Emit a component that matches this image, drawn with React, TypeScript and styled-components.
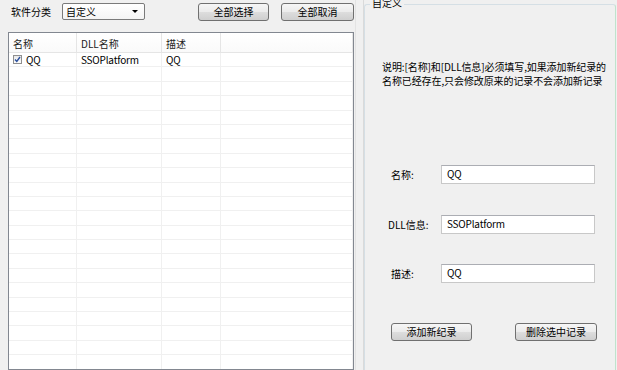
import React from 'react'
import styled, { createGlobalStyle } from 'styled-components'

const GlobalStyle = createGlobalStyle`
  html, body {
    margin: 0;
    padding: 0;
    background: #f0f0f0;
    overflow: hidden;
  }
  body {
    font-family: "Noto Sans CJK SC", "Liberation Sans", sans-serif;
    font-size: 10px;
    color: #000;
  }
`

const Window = styled.div`
  display: flex;
  width: 617px;
  height: 370px;
  overflow: hidden;
`

const LeftPane = styled.div`
  width: 355px;
  padding-left: 8px;
  box-sizing: border-box;
  display: flex;
  flex-direction: column;
`

const Toolbar = styled.div`
  display: flex;
  align-items: center;
  height: 17px;
  margin-top: 3px;
  margin-bottom: 12px;
`

const Label = styled.span`
  margin-left: 3px;
  width: 51px;
  line-height: 17px;
`

const Combo = styled.div`
  width: 83px;
  height: 17px;
  box-sizing: border-box;
  border: 1px solid #7a7a7a;
  background: linear-gradient(#ffffff, #f4f4f4);
  display: flex;
  align-items: center;
  justify-content: space-between;
  padding: 0 6px 0 3px;
  border-radius: 2px;
`

const Arrow = styled.span`
  width: 0;
  height: 0;
  border-left: 3px solid transparent;
  border-right: 3px solid transparent;
  border-top: 3px solid #000;
`

const Button = styled.div<{ $width: number; $left?: number }>`
  width: ${p => p.$width}px;
  margin-left: ${p => p.$left ?? 0}px;
  height: 18px;
  box-sizing: border-box;
  border: 1px solid #707070;
  border-radius: 3px;
  background: linear-gradient(#f6f6f6 0%, #ebebeb 50%, #dddddd 51%, #cfcfcf 100%);
  display: flex;
  align-items: center;
  justify-content: center;
  line-height: 16px;
`

const List = styled.div`
  width: 346px;
  height: 345px;
  box-sizing: border-box;
  border: 1px solid #828790;
  background: #fff;
  overflow: hidden;
`

const cols = '68px 85px 59px 1fr'

const HeaderRow = styled.div`
  display: grid;
  grid-template-columns: ${cols};
  height: 19px;
  border-bottom: 1px solid #e5e5e5;
  background: linear-gradient(#ffffff, #fafafa);
`

const HeaderCell = styled.div`
  border-right: 1px solid #e5e5e5;
  padding-left: 4px;
  line-height: 21px;
  color: #222;
`

const Row = styled.div`
  display: grid;
  grid-template-columns: ${cols};
  height: 14.4px;
  box-sizing: border-box;
  border-bottom: 1px solid #f0f0f0;
`

const Cell = styled.div`
  border-right: 1px solid #f0f0f0;
  padding-left: 4px;
  display: flex;
  align-items: center;
  line-height: 14px;
  overflow: hidden;
  white-space: nowrap;
  letter-spacing: -0.2px;
`

const Check = styled.span`
  width: 9px;
  height: 9px;
  box-sizing: border-box;
  border: 1px solid #8f8f8f;
  background: linear-gradient(#e8e8e8, #fdfdfd);
  margin-right: 4px;
  display: flex;
  align-items: center;
  justify-content: center;
`

const Splitter = styled.div`
  width: 9px;
  border-left: 1px solid #e3e3e3;
  border-right: 1px solid #dadada;
  box-sizing: border-box;
`

const Group = styled.div`
  position: relative;
  margin-top: 4px;
  width: 252px;
  height: 380px;
  box-sizing: border-box;
  border: 1px solid #d5dfe5;
  border-right-color: #bfe3cc;
  border-radius: 3px;
  padding: 0 0 0 17px;
  display: flex;
  flex-direction: column;
`

const Legend = styled.span`
  position: absolute;
  top: -9px;
  left: 5px;
  padding: 0 2px;
  background: #f0f0f0;
  line-height: 13px;
`

const Note = styled.p`
  margin: 55px 0 0 0;
  line-height: 13.5px;
  white-space: nowrap;
  letter-spacing: -0.1px;
`

const Form = styled.div`
  margin-top: 78px;
  display: flex;
  flex-direction: column;
  gap: 30.5px;
  padding-left: 6px;
`

const Field = styled.div`
  display: flex;
  align-items: center;
  height: 19px;
`

const FieldLabel = styled.span<{ $shift?: number }>`
  width: 53px;
  box-sizing: border-box;
  padding-left: ${p => p.$shift ?? 0}px;
`

const Input = styled.div`
  width: 154px;
  height: 19px;
  box-sizing: border-box;
  border: 1px solid #c8c8c8;
  border-top-color: #abadb3;
  background: #fff;
  padding-left: 5px;
  line-height: 16px;
  letter-spacing: -0.2px;
`

const Actions = styled.div`
  display: flex;
  margin-top: 40px;
  padding-left: 9px;
`

const rows = Array.from({ length: 23 })

const App = () => (
  <Window>
    <GlobalStyle />
    <LeftPane>
      <Toolbar>
        <Label>软件分类</Label>
        <Combo>
          <span>自定义</span>
          <Arrow />
        </Combo>
        <Button $width={71} $left={53}>全部选择</Button>
        <Button $width={73} $left={12}>全部取消</Button>
      </Toolbar>
      <List>
        <HeaderRow>
          <HeaderCell>名称</HeaderCell>
          <HeaderCell>DLL名称</HeaderCell>
          <HeaderCell>描述</HeaderCell>
          <HeaderCell />
        </HeaderRow>
        {rows.map((_, i) => (
          <Row key={i}>
            <Cell>
              {i === 0 && (
                <>
                  <Check>
                    <svg width="7" height="7" viewBox="0 0 7 7">
                      <path d="M1 3.5 L2.8 5.5 L6 1" fill="none" stroke="#2a4f9e" strokeWidth="1.4" />
                    </svg>
                  </Check>
                  QQ
                </>
              )}
            </Cell>
            <Cell>{i === 0 ? 'SSOPlatform' : ''}</Cell>
            <Cell>{i === 0 ? 'QQ' : ''}</Cell>
            <Cell />
          </Row>
        ))}
      </List>
    </LeftPane>
    <Splitter />
    <Group>
      <Legend>自定义</Legend>
      <Note>
        说明:[名称]和[DLL信息]必须填写,如果添加新纪录的
        <br />
        名称已经存在,只会修改原来的记录不会添加新记录
      </Note>
      <Form>
        <Field>
          <FieldLabel $shift={3}>名称:</FieldLabel>
          <Input>QQ</Input>
        </Field>
        <Field>
          <FieldLabel>DLL信息:</FieldLabel>
          <Input>SSOPlatform</Input>
        </Field>
        <Field>
          <FieldLabel $shift={3}>描述:</FieldLabel>
          <Input>QQ</Input>
        </Field>
      </Form>
      <Actions>
        <Button $width={81}>添加新纪录</Button>
        <Button $width={82} $left={43}>删除选中记录</Button>
      </Actions>
    </Group>
  </Window>
)

export default App
